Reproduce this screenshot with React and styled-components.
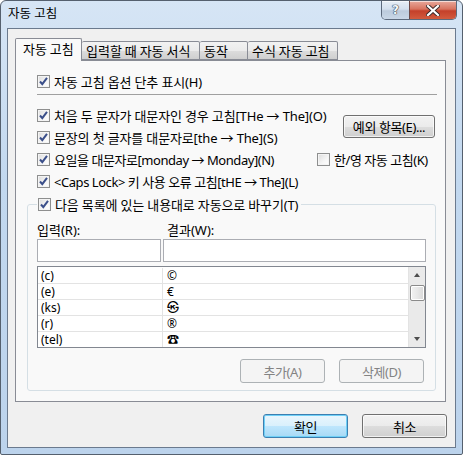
import React from "react";
import styled, { createGlobalStyle } from "styled-components";

const GlobalStyle = createGlobalStyle`
  html, body { margin: 0; padding: 0; background: #ffffff; }
  body {
    font-family: "Noto Sans", "Noto Sans CJK KR", sans-serif;
    font-size: 13px;
    color: #000;
  }
  * { box-sizing: border-box; }
`;

const Window = styled.div`
  width: 463px;
  height: 455px;
  border: 1px solid #55606e;
  border-radius: 6px 6px 2px 2px;
  background: linear-gradient(180deg, #d6e5f5 0%, #c2d8ef 40%, #bcd3ec 100%);
  display: flex;
  flex-direction: column;
  overflow: hidden;
`;

const TitleBar = styled.div`
  height: 27px;
  display: flex;
  align-items: flex-start;
  padding-left: 7px;
`;

const Title = styled.div`
  margin-top: 5px;
  font-size: 12.5px;
  line-height: 16px;
  color: #000;
`;

const Caption = styled.div`
  margin-left: auto;
  margin-right: 5px;
  display: flex;
  height: 19px;
  border: 1px solid #5c6a7c;
  border-top: none;
  border-radius: 0 0 5px 5px;
  overflow: hidden;
`;

const CapButton = styled.div`
  width: ${(p) => p.$w}px;
  height: 100%;
  display: flex;
  align-items: center;
  justify-content: center;
  background: ${(p) =>
    p.$close
      ? "linear-gradient(180deg, #e8a99c 0%, #d8735f 45%, #c4402a 55%, #d25b3e 100%)"
      : "linear-gradient(180deg, #e7eef6 0%, #d4e0ee 45%, #bccbdc 55%, #c9d7e7 100%)"};
  border-left: ${(p) => (p.$close ? "1px solid #6d4a48" : "none")};
  box-shadow: inset 0 1px 0 rgba(255,255,255,0.6);
`;

const HelpGlyph = styled.span`
  font-family: "DejaVu Sans", sans-serif;
  font-weight: bold;
  font-size: 12px;
  color: #f4f8fc;
  text-shadow: 0 0 1px #2d3a4a, 0 0 1px #2d3a4a, 0 0 1px #2d3a4a;
`;

const Client = styled.div`
  flex: 1;
  margin: 0 6px 6px 6px;
  border: 1px solid #6b7a8e;
  background: #f0f0f0;
  padding: 9px 8px 0 7px;
  display: flex;
  flex-direction: column;
`;

const TabStrip = styled.div`
  display: flex;
  align-items: flex-end;
  height: 22px;
  position: relative;
  z-index: 1;
`;

const Tab = styled.div`
  width: ${(p) => p.$w}px;
  height: ${(p) => (p.$active ? 23 : 19)}px;
  margin-bottom: ${(p) => (p.$active ? -1 : 0)}px;
  border: 1px solid #898c95;
  border-bottom: ${(p) => (p.$active ? "none" : "1px solid #898c95")};
  border-left: ${(p) => (p.$active ? "1px solid #898c95" : "none")};
  border-radius: 2px 2px 0 0;
  background: ${(p) =>
    p.$active ? "#f9f9f9" : "linear-gradient(180deg, #f2f2f2 0%, #ebebeb 50%, #dddddd 51%, #cfcfcf 100%)"};
  padding-left: ${(p) => (p.$active ? 7 : 4)}px;
  font-size: 13px;
  line-height: ${(p) => (p.$active ? 20 : 17)}px;
  white-space: nowrap;
  overflow: hidden;
  font-family: "Noto Sans CJK KR", sans-serif;
`;

const Panel = styled.div`
  width: 431px;
  height: 342px;
  border: 1px solid #898c95;
  background: #f9f9f9;
  padding: 12px 9px 0 11px;
  display: flex;
  flex-direction: column;
`;

const Options = styled.div`
  padding-left: 10px;
  padding-right: 1px;
  display: flex;
  flex-direction: column;
`;

const Separator = styled.div`
  height: 1px;
  background: #a0a0a0;
  margin: 5px -2px 9px 0;
`;

const OptGrid = styled.div`
  display: grid;
  grid-template-columns: minmax(0, 1fr) 118px;
  grid-template-rows: repeat(4, 22px);
`;

const CheckRow = styled.label`
  display: flex;
  align-items: center;
  gap: 4px;
  height: ${(p) => p.$h || 22}px;
  white-space: nowrap;
  grid-column: ${(p) => p.$col || "auto"};
  grid-row: ${(p) => p.$row || "auto"};
  font-size: 13px;
  font-family: "Noto Sans", "Noto Sans CJK KR", sans-serif;
  letter-spacing: ${(p) => (p.$tight ? "-0.45px" : "-0.15px")};
`;

const Box = styled.span`
  width: 13px;
  height: 13px;
  flex: none;
  border: 1px solid #8e8f8f;
  background: linear-gradient(135deg, #dcdcdc 0%, #f6f6f6 60%, #ffffff 100%);
  box-shadow: inset 0 0 0 1px #f4f4f4;
  display: flex;
  align-items: center;
  justify-content: center;
`;

const Check = ({ on }) => (
  <Box>
    {on && (
      <svg width="11" height="11" viewBox="0 0 11 11">
        <path d="M2 5.5 L4.3 8.2 L9 1.8" fill="none" stroke="#3b4f8a" strokeWidth="2" strokeLinejoin="miter" />
      </svg>
    )}
  </Box>
);

const Button = styled.div`
  width: ${(p) => p.$w || 85}px;
  height: ${(p) => p.$h || 24}px;
  display: flex;
  align-items: center;
  justify-content: center;
  white-space: nowrap;
  border: 1px solid ${(p) => (p.$disabled ? "#adb2b5" : p.$default ? "#3c7fb1" : "#707070")};
  border-radius: 3px;
  color: ${(p) => (p.$disabled ? "#838383" : "#000")};
  background: ${(p) =>
    p.$disabled
      ? "#f4f4f4"
      : p.$default
      ? "linear-gradient(180deg, #eaf6fd 0%, #d9f0fc 50%, #bee6fd 51%, #a7d9f5 100%)"
      : "linear-gradient(180deg, #f2f2f2 0%, #ebebeb 50%, #dddddd 51%, #cfcfcf 100%)"};
  box-shadow: ${(p) =>
    p.$disabled ? "none" : p.$default ? "inset 0 0 0 1px #6fd0f7" : "inset 0 0 0 1px rgba(255,255,255,0.7)"};
  font-size: 13px;
  letter-spacing: -0.4px;
  font-family: "Noto Sans", "Noto Sans CJK KR", sans-serif;
  grid-column: ${(p) => p.$col || "auto"};
  grid-row: ${(p) => p.$row || "auto"};
  justify-self: ${(p) => p.$justify || "auto"};
  align-self: ${(p) => p.$align || "auto"};
`;

const Group = styled.fieldset`
  margin: 4px 0 0 0;
  padding: 10px 9px 7px 9px;
  border: 1px solid #d5dfe5;
  border-radius: 3px;
  min-width: 0;
`;

const Legend = styled.legend`
  padding: 0 3px 0 1px;
  margin-left: 0;
`;

const FieldGrid = styled.div`
  display: grid;
  grid-template-columns: 124px 1fr;
  column-gap: 2px;
`;

const FieldLabel = styled.div`
  height: 17px;
  line-height: 16px;
  padding-left: ${(p) => p.$indent || 0}px;
  font-family: "Noto Sans", "Noto Sans CJK KR", sans-serif;
`;

const TextBox = styled.div`
  height: 23px;
  border: 1px solid #abadb3;
  background: #ffffff;
`;

const List = styled.div`
  margin-top: 4px;
  height: 82px;
  border: 1px solid #828790;
  background: #ffffff;
  display: flex;
  overflow: hidden;
`;

const Rows = styled.div`
  flex: 1;
  padding-top: 1px;
`;

const Row = styled.div`
  display: grid;
  grid-template-columns: 125px 1fr;
  height: 16px;
  border-bottom: 1px solid #e3e3e3;
`;

const Cell = styled.div`
  padding-left: ${(p) => p.$pl || 3}px;
  height: 15px;
  line-height: 15px;
  border-right: ${(p) => (p.$first ? "1px solid #e3e3e3" : "none")};
  font-family: "Noto Sans", "Noto Sans CJK KR", "DejaVu Sans", sans-serif;
  font-size: 12px;
`;

const ScrollBar = styled.div`
  width: 17px;
  background: #eaeaea;
  border-left: 1px solid #e3e3e3;
  display: flex;
  flex-direction: column;
  align-items: center;
  padding-top: 6px;
  padding-bottom: 6px;
`;

const Arrow = styled.div`
  width: 0;
  height: 0;
  border-left: 3.5px solid transparent;
  border-right: 3.5px solid transparent;
  ${(p) => (p.$down ? "border-top: 4px solid #4d4d4d;" : "border-bottom: 4px solid #4d4d4d;")}
`;

const Thumb = styled.div`
  margin-top: 8px;
  width: 15px;
  height: 16px;
  border: 1px solid #8b8b8b;
  border-radius: 2px;
  background: linear-gradient(90deg, #f3f3f3 0%, #e8e8e8 50%, #d8d8d8 100%);
  box-shadow: inset 0 0 0 1px #ffffff;
`;

const Spacer = styled.div`
  flex: 1;
`;

const ButtonRow = styled.div`
  display: flex;
  justify-content: flex-end;
  gap: 14px;
  margin: ${(p) => p.$m || "0"};
`;

const rows = [
  ["(c)", "©"],
  ["(e)", "€"],
  ["(ks)", "㉿"],
  ["(r)", "®"],
  ["(tel)", "☎"],
];

export default function App() {
  return (
    <>
      <GlobalStyle />
      <Window>
        <TitleBar>
          <Title>자동 고침</Title>
          <Caption>
            <CapButton $w={27}>
              <HelpGlyph>?</HelpGlyph>
            </CapButton>
            <CapButton $w={47} $close>
              <svg width="14" height="11" viewBox="0 0 14 11">
                <path d="M2 1 L12 10 M12 1 L2 10" stroke="#3a2a2a" strokeWidth="4" strokeLinecap="square" />
                <path d="M2 1 L12 10 M12 1 L2 10" stroke="#ffffff" strokeWidth="2.2" strokeLinecap="square" />
              </svg>
            </CapButton>
          </Caption>
        </TitleBar>
        <Client>
          <TabStrip>
            <Tab $w={67} $active>자동 고침</Tab>
            <Tab $w={118}>입력할 때 자동 서식</Tab>
            <Tab $w={48}>동작</Tab>
            <Tab $w={90}>수식 자동 고침</Tab>
          </TabStrip>
          <Panel>
            <Options>
              <CheckRow $h={16}>
                <Check on />
                자동 고침 옵션 단추 표시(H)
              </CheckRow>
              <Separator />
              <OptGrid>
                <CheckRow $row="1" $col="1">
                  <Check on />
                  처음 두 문자가 대문자인 경우 고침[THe → The](O)
                </CheckRow>
                <CheckRow $row="2" $col="1">
                  <Check on />
                  문장의 첫 글자를 대문자로[the → The](S)
                </CheckRow>
                <CheckRow $row="3" $col="1" $tight>
                  <Check on />
                  요일을 대문자로[monday → Monday](N)
                </CheckRow>
                <CheckRow $row="4" $col="1" $tight>
                  <Check on />
                  &lt;Caps Lock&gt; 키 사용 오류 고침[tHE → The](L)
                </CheckRow>
                <Button $w={92} $h={23} $row="1 / span 2" $col="2" $justify="end" $align="center">
                  예외 항목(E)...
                </Button>
                <CheckRow $row="3" $col="2" $tight>
                  <Check />
                  한/영 자동 고침(K)
                </CheckRow>
              </OptGrid>
            </Options>
            <Group>
              <Legend>
                <CheckRow $h={16}>
                  <Check on />
                  다음 목록에 있는 내용대로 자동으로 바꾸기(T)
                </CheckRow>
              </Legend>
              <FieldGrid>
                <FieldLabel>입력(R):</FieldLabel>
                <FieldLabel $indent={4}>결과(W):</FieldLabel>
                <TextBox />
                <TextBox />
              </FieldGrid>
              <List>
                <Rows>
                  {rows.map(([a, b]) => (
                    <Row key={a}>
                      <Cell $first>{a}</Cell>
                      <Cell $pl={4}>{b}</Cell>
                    </Row>
                  ))}
                </Rows>
                <ScrollBar>
                  <Arrow />
                  <Thumb />
                  <Spacer />
                  <Arrow $down />
                </ScrollBar>
              </List>
              <ButtonRow $m="11px 2px 0 0">
                <Button $disabled>추가(A)</Button>
                <Button $disabled>삭제(D)</Button>
              </ButtonRow>
            </Group>
          </Panel>
          <ButtonRow $m="12px 0 0 0">
            <Button $default>확인</Button>
            <Button>취소</Button>
          </ButtonRow>
        </Client>
      </Window>
    </>
  );
}
